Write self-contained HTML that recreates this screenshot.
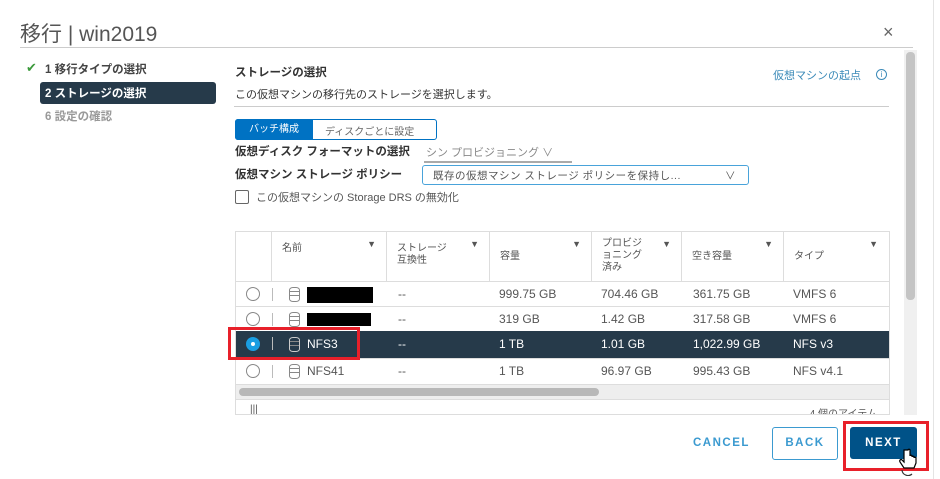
<!DOCTYPE html>
<html><head><meta charset="utf-8"><style>
*{margin:0;padding:0;box-sizing:border-box}
body{width:940px;height:479px;background:#fff;position:relative;overflow:hidden;font-family:"Liberation Sans","Noto Sans CJK JP",sans-serif;color:#333;font-size:12px}
.a{position:absolute;white-space:nowrap}
.b{font-weight:bold}
.th{position:absolute;top:0;height:50px;border-left:1px solid #ddd;font-size:10px;color:#555;padding:11px 0 0 10px;line-height:12px}
.th .f{position:absolute;right:10px;top:6px;font-size:9px;color:#555}
.row{position:absolute;left:0;width:654px;height:25px;border-top:1px solid #ddd;font-size:12px;color:#555}
.row span{position:absolute;top:5px}
.rad{position:absolute;left:10px;top:5px;width:14px;height:14px;border:1px solid #888;border-radius:50%;background:#fff}
.sep{position:absolute;left:36px;top:6px;width:1px;height:13px;background:#bbb}
.db{position:absolute;left:53px;top:5px;width:11px;height:15px;border:1.5px solid #888;border-radius:4px/3px}
.db:before,.db:after{content:"";position:absolute;left:0;right:0;border-top:1.5px solid #888}
.db:before{top:3px}.db:after{top:7px}
</style></head><body>
<div class="a" style="left:20px;top:18px;font-size:21px;color:#555">移行 | win2019</div>
<div class="a" style="left:883px;top:22px;font-size:18px;color:#666">×</div>
<div class="a" style="left:20px;top:47px;width:893px;height:1px;background:#ccc"></div>
<div class="a" style="left:933px;top:0;width:1px;height:479px;background:#e4e4e4"></div>
<div class="a" style="left:904px;top:50px;width:13px;height:365px;background:#f0f0f0"></div>
<div class="a" style="left:906px;top:52px;width:9px;height:248px;background:#c4c4c4;border-radius:4px"></div>

<div class="a" style="left:26px;top:60px;color:#3c9a3c;font-size:13px">✔</div>
<div class="a b" style="left:45px;top:61px;font-size:11.5px;color:#444">1 移行タイプの選択</div>
<div class="a" style="left:40px;top:82px;width:176px;height:22px;background:#263a4a;border-radius:3px"></div>
<div class="a b" style="left:45px;top:85px;font-size:11.5px;color:#fff">2 ストレージの選択</div>
<div class="a b" style="left:45px;top:108px;font-size:11.5px;color:#999">6 設定の確認</div>

<div class="a b" style="left:235px;top:64px;font-size:11.5px;color:#333">ストレージの選択</div>
<div class="a" style="left:235px;top:86px;font-size:11px;color:#333">この仮想マシンの移行先のストレージを選択します。</div>
<div class="a" style="left:773px;top:67px;font-size:11px;color:#3b8ab8">仮想マシンの起点</div>
<div class="a" style="left:876px;top:69px;width:11px;height:11px;border:1.2px solid #3b8ab8;border-radius:50%;font-size:8px;color:#3b8ab8;text-align:center;line-height:9px">i</div>
<div class="a" style="left:234px;top:106px;width:655px;height:1px;background:#ccc"></div>

<div class="a" style="left:235px;top:119px;width:202px;height:21px;border:1px solid #0072c3;border-radius:3px"></div>
<div class="a" style="left:235px;top:119px;width:78px;height:21px;background:#0072c3;border-radius:3px 0 0 3px;color:#fff;font-size:10px;text-align:center;line-height:21px">バッチ構成</div>
<div class="a" style="left:325px;top:123px;font-size:10px;color:#666">ディスクごとに設定</div>
<div class="a b" style="left:235px;top:143px;font-size:11.5px">仮想ディスク フォーマットの選択</div>
<div class="a" style="left:426px;top:144px;font-size:11px;color:#888">シン プロビジョニング ∨</div>
<div class="a" style="left:424px;top:161px;width:148px;height:2px;background:#aaa"></div>
<div class="a b" style="left:235px;top:166px;font-size:11.5px">仮想マシン ストレージ ポリシー</div>
<div class="a" style="left:422px;top:165px;width:327px;height:20px;border:1.5px solid #49a3da;border-radius:3px;font-size:10.5px;color:#555;padding:2px 0 0 10px;letter-spacing:0.5px">既存の仮想マシン ストレージ ポリシーを保持し...<span style="position:absolute;right:12px;top:2px">∨</span></div>
<div class="a" style="left:235px;top:190px;width:14px;height:14px;border:1.5px solid #666;border-radius:2px"></div>
<div class="a" style="left:256px;top:189px;font-size:11px;color:#555">この仮想マシンの Storage DRS の無効化</div>

<div class="a" style="left:235px;top:231px;width:655px;height:184px;border:1px solid #ddd;overflow:hidden">
 <div class="th" style="left:35px;width:115px">名前<span class="f">▼</span></div>
 <div class="th" style="left:150px;width:103px">ストレージ<br>互換性<span class="f">▼</span></div>
 <div class="th" style="left:253px;width:102px;padding-top:19px">容量<span class="f">▼</span></div>
 <div class="th" style="left:355px;width:90px;padding-top:6px">プロビジ<br>ョニング<br>済み<span class="f">▼</span></div>
 <div class="th" style="left:445px;width:102px;padding-top:19px">空き容量<span class="f">▼</span></div>
 <div class="th" style="left:547px;width:105px;padding-top:19px">タイプ<span class="f">▼</span></div>
 <div class="row" style="top:49px"><div class="rad"></div><div class="sep"></div><div class="db"></div><div style="position:absolute;left:71px;top:5px;width:66px;height:16px;background:#000"></div><span style="left:162px">--</span><span style="left:263px">999.75 GB</span><span style="left:365px">704.46 GB</span><span style="left:457px">361.75 GB</span><span style="left:557px">VMFS 6</span></div>
 <div class="row" style="top:74px"><div class="rad"></div><div class="sep"></div><div class="db"></div><div style="position:absolute;left:71px;top:6px;width:64px;height:13px;background:#000"></div><span style="left:162px">--</span><span style="left:263px">319 GB</span><span style="left:365px">1.42 GB</span><span style="left:457px">317.58 GB</span><span style="left:557px">VMFS 6</span></div>
 <div class="row" style="top:99px;height:27px;background:#263a4a;color:#fff;border-top:none"><div class="rad" style="border:none;background:#1a9ee2;top:6px"><div style="position:absolute;left:5px;top:5px;width:4px;height:4px;background:#fff;border-radius:50%"></div></div><div class="sep"></div><div class="db" style="border-color:#ccc;top:6px"></div><span style="left:71px;top:6px">NFS3</span><span style="left:162px;top:6px">--</span><span style="left:263px;top:6px">1 TB</span><span style="left:365px;top:6px">1.01 GB</span><span style="left:457px;top:6px">1,022.99 GB</span><span style="left:557px;top:6px">NFS v3</span></div>
 <div class="row" style="top:126px"><div class="rad"></div><div class="sep"></div><div class="db"></div><span style="left:71px">NFS41</span><span style="left:162px">--</span><span style="left:263px">1 TB</span><span style="left:365px">96.97 GB</span><span style="left:457px">995.43 GB</span><span style="left:557px">NFS v4.1</span></div>
 <div style="position:absolute;left:0;top:152px;width:654px;height:16px;background:#eee;border-top:1px solid #ddd;border-bottom:1px solid #ddd"></div>
 <div style="position:absolute;left:3px;top:156px;width:360px;height:8px;background:#b8b8b8;border-radius:4px"></div>
 <div style="position:absolute;left:14px;top:172px;font-size:10px;color:#555">|||</div>
 <div style="position:absolute;right:12px;top:173px;font-size:10px;color:#555">4 個のアイテム</div>
</div>

<div class="a" style="left:228px;top:327px;width:132px;height:33px;border:3px solid #e8202a"></div>

<div class="a b" style="left:693px;top:437px;font-size:11.5px;color:#3b9ad0;letter-spacing:1.5px">CANCEL</div>
<div class="a b" style="left:772px;top:427px;width:66px;height:33px;border:1px solid #3b9ad0;border-radius:3px;color:#3b9ad0;font-size:11.5px;letter-spacing:1.5px;text-align:center;line-height:31px">BACK</div>
<div class="a b" style="left:850px;top:427px;width:67px;height:32px;background:#005288;border-radius:3px;color:#fff;font-size:11.5px;letter-spacing:1.5px;text-align:center;line-height:32px">NEXT</div>
<div class="a" style="left:843px;top:421px;width:86px;height:50px;border:3px solid #e8202a"></div>
<svg class="a" style="left:898px;top:448px" width="22" height="28" viewBox="0 0 22 28"><path d="M6 2v12l-2-2c-1-1-3 0-2 2l4 6h10l2-5v-5c0-1-2-1-2 0v-1c0-1-2-1-2 0v-1c0-1-2-1-2 0V2c0-1-2-1-2 0z" fill="#fff" stroke="#000" stroke-width="1.2"/><path d="M4 22a6 6 0 0 0 10 4" fill="none" stroke="#333" stroke-width="1.2"/></svg>
</body></html>
